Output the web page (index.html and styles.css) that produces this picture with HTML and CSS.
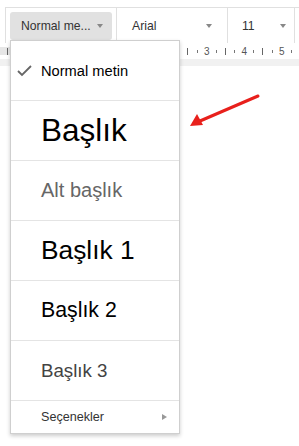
FILE: index.html
```html
<!DOCTYPE html>
<html lang="tr">
<head>
  <meta charset="UTF-8">
  <title>Stil menüsü</title>
  <link rel="stylesheet" href="styles.css">
</head>
<body>
  <!-- Araç çubuğu -->
  <div class="toolbar">
    <div class="tb-group tb-style">
      <div class="tb-select active">
        <span class="tb-label">Normal me...</span>
        <span class="tb-caret"></span>
      </div>
    </div>
    <div class="tb-group tb-font">
      <div class="tb-select">
        <span class="tb-label">Arial</span>
        <span class="tb-caret"></span>
      </div>
    </div>
    <div class="tb-group tb-size">
      <div class="tb-select">
        <span class="tb-label">11</span>
        <span class="tb-caret"></span>
      </div>
    </div>
  </div>

  <!-- Cetvel -->
  <div class="ruler">
    <div class="ruler-margin"><span class="tick long"></span></div>
    <div class="ruler-ticks">
      <span class="cell"><span class="tick long"></span></span>
      <span class="cell"><span class="tick dot"></span></span>
      <span class="cell num">3</span>
      <span class="cell"><span class="tick dot"></span></span>
      <span class="cell"><span class="tick long"></span></span>
      <span class="cell"><span class="tick dot"></span></span>
      <span class="cell num">4</span>
      <span class="cell"><span class="tick dot"></span></span>
      <span class="cell"><span class="tick long"></span></span>
      <span class="cell"><span class="tick dot"></span></span>
      <span class="cell num">5</span>
      <span class="cell"><span class="tick dot"></span></span>
    </div>
  </div>
  <div class="ruler-band"></div>
  <div class="doc"></div>

  <!-- Açılır stil menüsü -->
  <div class="style-menu">
    <div class="menu-item normal">
      <svg class="check" width="16" height="12" viewBox="0 0 16 12">
        <path d="M1 6 L5 10 L14 1" fill="none" stroke="#666" stroke-width="1.8"/>
      </svg>
      <span>Normal metin</span>
    </div>
    <div class="menu-item title"><span>Başlık</span></div>
    <div class="menu-item subtitle"><span>Alt başlık</span></div>
    <div class="menu-item h1"><span>Başlık 1</span></div>
    <div class="menu-item h2"><span>Başlık 2</span></div>
    <div class="menu-item h3"><span>Başlık 3</span></div>
    <div class="menu-item options">
      <span>Seçenekler</span>
      <span class="sub-arrow"></span>
    </div>
  </div>

  <!-- Kırmızı ok -->
  <svg class="red-arrow" width="80" height="40" viewBox="0 0 80 40">
    <line x1="72" y1="4" x2="14" y2="29" stroke="#e8201c" stroke-width="3" stroke-linecap="round"/>
    <polygon points="4,34 11,22 17,33" fill="#e8201c"/>
  </svg>
</body>
</html>
```

FILE: styles.css
```css
body {
  margin: 0;
  width: 299px;
  height: 446px;
  overflow: hidden;
  background: #fff;
  font-family: "Liberation Sans", Arial, sans-serif;
  position: relative;
}
.toolbar {
  margin-top: 7px;
  height: 35px;
  border-top: 1px solid #e0e0e0;
  border-left: 1px solid #e0e0e0;
  margin-left: 5px;
  display: flex;
  font-family: "Liberation Sans", Arial, sans-serif;
  font-size: 12.2px;
  color: #333;
  white-space: nowrap;
}
.tb-group {
  border-right: 1px solid #e0e0e0;
  display: flex;
  align-items: flex-start;
}
.tb-style {
  width: 106px;
  padding-left: 4px;
}
.tb-font {
  width: 110px;
}
.tb-size {
  width: 66px;
}
.tb-select {
  flex: 1;
  height: 28px;
  margin-top: 4px;
  display: flex;
  align-items: center;
  justify-content: space-between;
  border-radius: 3px;
}
.tb-style .tb-select {
  flex: none;
  width: 102px;
  box-sizing: border-box;
  padding: 0 9px 0 11px;
}
.tb-font .tb-select {
  padding: 0 15px 0 15px;
}
.tb-size .tb-select {
  padding: 0 8px 0 14px;
}
.tb-select.active {
  background: #e1e1e1;
}
.tb-caret {
  width: 0;
  height: 0;
  border-left: 3.5px solid transparent;
  border-right: 3.5px solid transparent;
  border-top: 4px solid #888;
}
.ruler {
  height: 16px;
  display: flex;
  align-items: center;
  font-size: 10px;
  color: #555;
}
.ruler-margin {
  width: 10px;
  height: 8px;
  background: #e6e6e6;
  display: flex;
  align-items: center;
  justify-content: flex-end;
  padding-right: 2px;
  box-sizing: border-box;
}
.ruler-ticks {
  display: flex;
  margin-left: 173.3px;
}
.cell {
  width: 9.375px;
  height: 10px;
  display: flex;
  align-items: center;
  justify-content: center;
}
.tick.long {
  width: 1px;
  height: 7px;
  background: #666;
}
.tick.dot {
  width: 1px;
  height: 3px;
  background: #777;
}
.ruler-band {
  height: 7px;
  background: #f1f1f1;
}
.doc {
  height: 380px;
}
.style-menu {
  position: absolute;
  left: 10px;
  top: 40px;
  width: 168px;
  background: #fff;
  border: 1px solid #cfcfcf;
  box-shadow: 0 2px 4px rgba(0,0,0,0.2);
}
.menu-item {
  height: 59px;
  border-bottom: 1px solid #e4e4e4;
  display: flex;
  align-items: center;
  padding-left: 30px;
  position: relative;
  color: #000;
  white-space: nowrap;
}
.check {
  position: absolute;
  left: 6px;
  top: 24px;
}
.normal {
  font-size: 14.67px;
}
.title {
  font-size: 31.5px;
}
.subtitle {
  font-size: 20px;
  color: #666;
}
.h1 {
  font-size: 26.3px;
}
.h2 {
  font-size: 21.3px;
}
.h3 {
  font-size: 18.7px;
  color: #434343;
}
.options {
  height: 32px;
  border-bottom: none;
  font-size: 12.6px;
  color: #333;
  justify-content: space-between;
  padding-right: 12px;
}
.sub-arrow {
  width: 0;
  height: 0;
  border-top: 3px solid transparent;
  border-bottom: 3px solid transparent;
  border-left: 5px solid #999;
}
.red-arrow {
  position: absolute;
  left: 186px;
  top: 92px;
}
```
